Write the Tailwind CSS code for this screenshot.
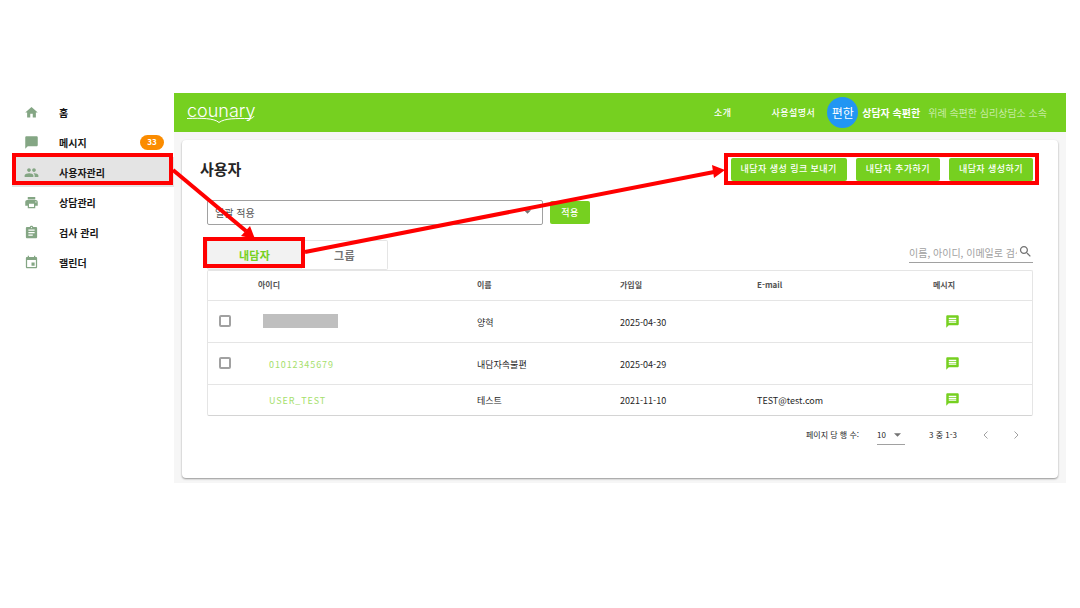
<!DOCTYPE html>
<html lang="ko">

<head>
  <meta charset="UTF-8">
  <meta name="viewport" content="width=device-width, initial-scale=1.0">
  <title>counary</title>
  <script src="https://cdn.jsdelivr.net/npm/@tailwindcss/browser@4"></script>
</head>

<body class="relative bg-white font-['Noto_Sans_CJK_KR','Noto_Sans',sans-serif] text-[9px] text-neutral-800">

  <!-- shared icons -->
  <svg class="hidden">
    <symbol id="chat" viewBox="0 0 24 24">
      <path d="M20 2H4c-1.1 0-1.99.9-1.99 2L2 22l4-4h14c1.1 0 2-.9 2-2V4c0-1.1-.9-2-2-2zm-2 12H6v-2h12v2zm0-3H6V9h12v2zm0-3H6V6h12v2z" />
    </symbol>
  </svg>

  <div class="flex pt-[93px] pl-3 pr-[14px]">
    <!-- Sidebar -->
    <nav class="w-[162px] shrink-0 pt-1 text-[10px] font-bold text-neutral-900">
      <a href="#" class="flex h-[30px] items-center gap-5 pl-3">
        <svg class="size-[15px] fill-[#84a684]" viewBox="0 0 24 24"><path d="M10 20v-6h4v6h5v-8h3L12 3 2 12h3v8z" /></svg>
        <span>홈</span>
      </a>
      <a href="#" class="flex h-[30px] items-center gap-5 pl-3">
        <svg class="size-[15px] fill-[#84a684]" viewBox="0 0 24 24"><path d="M20 2H4c-1.1 0-2 .9-2 2v18l4-4h14c1.1 0 2-.9 2-2V4c0-1.1-.9-2-2-2z" /></svg>
        <span>메시지</span>
        <span class="ml-auto mr-[10px] flex h-[15px] w-6 items-center justify-center rounded-full bg-[#fb8c00] text-[8px] text-white">33</span>
      </a>
      <a href="#" class="flex h-[30px] items-center gap-5 bg-[#e4e4e4] pl-3">
        <svg class="size-[15px] fill-[#84a684]" viewBox="0 0 24 24"><path d="M16 11c1.66 0 2.99-1.34 2.99-3S17.66 5 16 5c-1.66 0-3 1.34-3 3s1.34 3 3 3zm-8 0c1.66 0 2.99-1.34 2.99-3S9.66 5 8 5C6.34 5 5 6.34 5 8s1.34 3 3 3zm0 2c-2.33 0-7 1.17-7 3.5V19h14v-2.5c0-2.33-4.67-3.5-7-3.5zm8 0c-.29 0-.62.02-.97.05 1.16.84 1.97 1.97 1.97 3.45V19h6v-2.5c0-2.33-4.67-3.5-7-3.5z" /></svg>
        <span>사용자관리</span>
      </a>
      <a href="#" class="flex h-[30px] items-center gap-5 pl-3">
        <svg class="size-[15px] fill-[#84a684]" viewBox="0 0 24 24"><path d="M19 8H5c-1.66 0-3 1.34-3 3v6h4v4h12v-4h4v-6c0-1.66-1.34-3-3-3zm-3 11H8v-5h8v5zm3-7c-.55 0-1-.45-1-1s.45-1 1-1 1 .45 1 1-.45 1-1 1zm-1-9H6v4h12V3z" /></svg>
        <span>상담관리</span>
      </a>
      <a href="#" class="flex h-[30px] items-center gap-5 pl-3">
        <svg class="size-[15px] fill-[#84a684]" viewBox="0 0 24 24"><path d="M19 3h-4.18C14.4 1.84 13.3 1 12 1c-1.3 0-2.4.84-2.82 2H5c-1.1 0-2 .9-2 2v14c0 1.1.9 2 2 2h14c1.1 0 2-.9 2-2V5c0-1.1-.9-2-2-2zm-7 0c.55 0 1 .45 1 1s-.45 1-1 1-1-.45-1-1 .45-1 1-1zm2 14H7v-2h7v2zm3-4H7v-2h10v2zm0-4H7V7h10v2z" /></svg>
        <span>검사 관리</span>
      </a>
      <a href="#" class="flex h-[30px] items-center gap-5 pl-3">
        <svg class="size-[15px] fill-[#84a684]" viewBox="0 0 24 24"><path d="M17 12h-5v5h5v-5zM16 1v2H8V1H6v2H5c-1.11 0-1.99.9-1.99 2L3 19c0 1.1.89 2 2 2h14c1.1 0 2-.9 2-2V5c0-1.1-.9-2-2-2h-1V1h-2zm3 18H5V8h14v11z" /></svg>
        <span>캘린더</span>
      </a>
    </nav>

    <div class="min-w-0 grow bg-[#f6f6f6]">
      <!-- Top bar -->
      <header class="flex h-[39px] items-center bg-[#76d020] pl-[13px] pr-[19px] text-white">
        <a href="#" class="relative pb-1 font-[Inter] text-lg leading-6 font-light">
          counary
          <svg class="absolute top-[17px] left-0 h-[10px] w-[70px] fill-none stroke-white" viewBox="0 0 70 10"><path d="M0 2.500C14 2 27 2 32 6.500C38 2 50 2.500 62 2.500Q67 2.500 67 -1" /></svg>
        </a>
        <nav class="ml-auto flex gap-10 font-medium tracking-wider">
          <a href="#">소개</a>
          <a href="#">사용설명서</a>
        </nav>
        <div class="ml-3 flex size-[31px] items-center justify-center rounded-full bg-[#2196f3] text-xs">편한</div>
        <span class="ml-1 text-[10px] font-bold">상담자 속편한</span>
        <span class="ml-2 text-[10px] font-light text-white/80">위례 속편한 심리상담소 소속</span>
      </header>

      <main class="p-2 pb-[5px]">
        <div class="rounded-sm bg-white px-[25px] pt-4 pb-[33px] shadow-[0_1px_2px_rgba(0,0,0,0.4)]">
          <div class="-ml-[7px] flex h-[26px] items-center gap-[9px]">
            <h1 class="mr-auto text-[15px] font-bold">사용자</h1>
            <button class="h-[23px] rounded-xs bg-[#76d020] px-[10px] font-medium tracking-wider text-white">내담자 생성 링크 보내기</button>
            <button class="h-[23px] rounded-xs bg-[#76d020] px-[10px] font-medium tracking-wider text-white">내담자 추가하기</button>
            <button class="h-[23px] rounded-xs bg-[#76d020] px-[10px] font-medium tracking-wider text-white">내담자 생성하기</button>
          </div>

          <div class="mt-[18px] flex items-center gap-[7px]">
            <div class="relative w-[336px]">
              <select aria-label="일괄 적용" class="block h-[25px] w-full appearance-none rounded-xs border border-neutral-400 px-[7px] text-[10px] text-neutral-600">
                <option>일괄 적용</option>
              </select>
              <svg class="pointer-events-none absolute top-[10px] right-3 h-1 w-[7px] fill-neutral-500" viewBox="0 0 8 4"><path d="M0 0h8L4 4z" /></svg>
            </div>
            <button class="h-[23px] w-10 rounded-xs bg-[#76d020] font-medium tracking-wider text-white">적용</button>
          </div>

          <div class="mt-[15px] flex h-[30px] items-start justify-between">
            <div class="flex text-[11px] font-bold tracking-wide text-neutral-500">
              <button class="h-[30px] w-[95px] rounded-l-xs border border-neutral-200 bg-[#f2f2f2] text-[#76d020]">내담자</button>
              <button class="h-[30px] w-[86px] rounded-r-xs border border-l-0 border-neutral-200">그룹</button>
            </div>
            <label class="flex h-[23px] w-[124px] items-center border-b border-neutral-400">
              <input type="text" aria-label="검색" placeholder="이름, 아이디, 이메일로 검색" class="w-[108px] pt-0.5 text-[10px] outline-none placeholder:text-neutral-400">
              <svg class="ml-px size-[15px] shrink-0 fill-neutral-500" viewBox="0 0 24 24"><path d="M15.500 14h-.79l-.28-.27C15.410 12.590 16 11.110 16 9.500 16 5.910 13.090 3 9.500 3S3 5.910 3 9.500 5.910 16 9.500 16c1.610 0 3.090-.59 4.230-1.570l.27.28v.79l5 4.990L20.490 19l-4.990-5zm-6 0C7.010 14 5 11.990 5 9.500S7.010 5 9.500 5 14 7.010 14 9.500 11.990 14 9.500 14z" /></svg>
            </label>
          </div>

          <!-- User list -->
          <div class="rounded-xs border border-neutral-200 border-b-neutral-300">
            <table class="w-full table-fixed text-left">
              <thead class="text-[8px] text-neutral-600">
                <tr class="h-[29px]">
                  <th class="w-[42px]"></th>
                  <th class="w-[219px] pl-2">아이디</th>
                  <th class="w-[143px] pl-2">이름</th>
                  <th class="w-[137px] pl-2">가입일</th>
                  <th class="w-[176px] pl-2">E-mail</th>
                  <th class="pl-2">메시지</th>
                </tr>
              </thead>
              <tbody>
                <tr class="h-[42px] border-t border-neutral-200">
                  <td class="pl-[11px]"><input type="checkbox" aria-label="양혁 선택" class="block size-3 appearance-none rounded-xs border-2 border-neutral-400"></td>
                  <td class="pl-[13px]"><div class="h-[14px] w-[75px] bg-[#bfbfbf]"></div></td>
                  <td class="pt-1 pl-2">양혁</td>
                  <td class="pt-1 pl-2">2025-04-30</td>
                  <td class="pt-1 pl-2"></td>
                  <td class="pl-5"><button aria-label="메시지" class="block"><svg class="size-[15px] fill-[#76d020]"><use href="#chat" /></svg></button></td>
                </tr>
                <tr class="h-[42px] border-t border-neutral-200">
                  <td class="pl-[11px]"><input type="checkbox" aria-label="내담자속불편 선택" class="block size-3 appearance-none rounded-xs border-2 border-neutral-400"></td>
                  <td class="pt-1 pl-[19px]"><a href="#" class="tracking-widest text-[#a5e06c]">01012345679</a></td>
                  <td class="pt-1 pl-2">내담자속불편</td>
                  <td class="pt-1 pl-2">2025-04-29</td>
                  <td class="pt-1 pl-2"></td>
                  <td class="pl-5"><button aria-label="메시지" class="block"><svg class="size-[15px] fill-[#76d020]"><use href="#chat" /></svg></button></td>
                </tr>
                <tr class="h-[31px] border-t border-neutral-200">
                  <td></td>
                  <td class="pt-0.5 pl-[19px]"><a href="#" class="tracking-widest text-[#a5e06c]">USER_TEST</a></td>
                  <td class="pt-0.5 pl-2">테스트</td>
                  <td class="pt-0.5 pl-2">2021-11-10</td>
                  <td class="pt-0.5 pl-2">TEST@test.com</td>
                  <td class="pl-5"><button aria-label="메시지" class="block"><svg class="size-[15px] fill-[#76d020]"><use href="#chat" /></svg></button></td>
                </tr>
              </tbody>
            </table>
          </div>

          <div class="mt-[9px] flex h-5 items-center justify-end pr-[14px] text-[8px]">
            <label for="rows">페이지 당 행 수:</label>
            <div class="relative ml-[18px] w-7">
              <select id="rows" class="block h-5 w-full appearance-none border-b border-neutral-400">
                <option>10</option>
              </select>
              <svg class="pointer-events-none absolute top-2 right-1 h-1 w-[7px] fill-neutral-500" viewBox="0 0 8 4"><path d="M0 0h8L4 4z" /></svg>
            </div>
            <span class="ml-6">3 중 1-3</span>
            <button aria-label="이전" class="ml-[26px]"><svg class="h-2 w-[5px] fill-none stroke-neutral-400" viewBox="0 0 5 8"><path d="M4.500 .5L1 4l3.500 3.500" /></svg></button>
            <button aria-label="다음" class="ml-[26px]"><svg class="h-2 w-[5px] fill-none stroke-neutral-400" viewBox="0 0 5 8"><path d="M.5 .5L4 4 .5 7.500" /></svg></button>
          </div>
        </div>
      </main>
    </div>
  </div>

  <!-- Guide marks: boxes and arrows over the screen -->
  <svg class="pointer-events-none absolute top-0 left-0 h-[608px] w-[1080px]" viewBox="0 0 1080 608">
    <g fill="none" stroke="#ff0000" stroke-width="4">
      <rect x="14" y="155" width="157" height="28" />
      <rect x="205" y="239" width="98" height="27" />
      <rect x="726" y="155" width="311" height="28" />
      <path d="M173 170L246 231" />
      <path d="M305 252L714 172" />
    </g>
    <g fill="#ff0000">
      <path d="M255 239L241 236L250 226z" />
      <path d="M725 170L714 178L712 165z" />
    </g>
  </svg>
</body>

</html>
